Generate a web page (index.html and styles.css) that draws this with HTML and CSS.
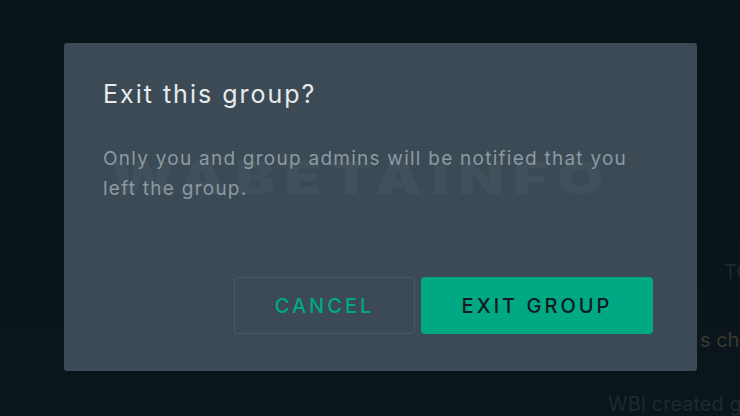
FILE: index.html
```html
<!DOCTYPE html>
<html lang="en">
<head>
    <meta charset="UTF-8">
    <meta name="viewport" content="width=device-width, initial-scale=1.0">
    <title>Exit group</title>
    <link rel="stylesheet" href="styles.css">
</head>
<body>
    <div class="screen">
        <div class="chat">
            <p class="msg msg-top">TO</p>
            <p class="msg msg-mid">s changed the group</p>
            <p class="msg msg-bottom">WBI created group</p>
        </div>

        <div class="dialog">
            <div class="watermark">WABETAINFO</div>
            <h2 class="dialog-title">Exit this group?</h2>
            <p class="dialog-text">Only you and group admins will be notified that you left the group.</p>
            <div class="dialog-actions">
                <button type="button" class="button button-cancel">Cancel</button>
                <button type="button" class="button button-exit">Exit group</button>
            </div>
        </div>
    </div>
</body>
</html>
```

FILE: styles.css
```css
* {
  margin: 0;
  padding: 0;
  box-sizing: border-box;
  -webkit-font-smoothing: antialiased;
}

body {
  width: 740px;
  height: 416px;
  overflow: hidden;
  background: #0a141a;
  font-family: 'Inter', 'Liberation Sans', sans-serif;
}

.screen {
  position: relative;
  width: 740px;
  height: 416px;
  background: linear-gradient(to bottom, #08131a, #0b161c);
}

.chat {
  display: flex;
  flex-direction: column;
  padding-top: 260px;
  white-space: nowrap;
  overflow: hidden;
  width: 740px;
}

.msg {
  font-size: 20px;
  color: #1d2a31;
}

.msg-top {
  margin-left: 724px;
}

.msg-mid {
  margin-left: 700px;
  margin-top: 44px;
  color: #3b3a31;
}

.msg-bottom {
  margin-left: 608px;
  margin-top: 40px;
}

.dialog {
  position: absolute;
  left: 64px;
  top: 43px;
  width: 633px;
  height: 328px;
  background: #3b4a54;
  border-radius: 3px;
  padding: 36px 44px 37px 39px;
  display: flex;
  flex-direction: column;
  overflow: hidden;
}

.watermark {
  position: absolute;
  left: 46px;
  top: 106px;
  font-size: 46px;
  font-weight: 900;
  letter-spacing: 7px;
  color: rgba(255, 255, 255, 0.035);
  transform: scaleX(1.3);
  transform-origin: left center;
  pointer-events: none;
}

.dialog-title {
  font-size: 25px;
  font-weight: 400;
  line-height: 30px;
  color: #e6eaec;
  letter-spacing: 2px;
}

.dialog-text {
  position: relative;
  margin-top: 35px;
  font-size: 19px;
  line-height: 30px;
  color: #8b9aa3;
  letter-spacing: 1.25px;
  width: 540px;
}

.dialog-actions {
  margin-top: auto;
  display: flex;
  justify-content: flex-end;
  gap: 6px;
}

.button {
  height: 57px;
  border-radius: 4px;
  font-family: 'Inter', 'Liberation Sans', sans-serif;
  font-size: 20px;
  font-weight: 500;
  letter-spacing: 3px;
  text-transform: uppercase;
  cursor: pointer;
}

.button-cancel {
  width: 181px;
  background: transparent;
  border: 1px solid #4a5962;
  color: #00a884;
}

.button-exit {
  width: 232px;
  background: #00a884;
  border: none;
  color: #111b21;
}
```
